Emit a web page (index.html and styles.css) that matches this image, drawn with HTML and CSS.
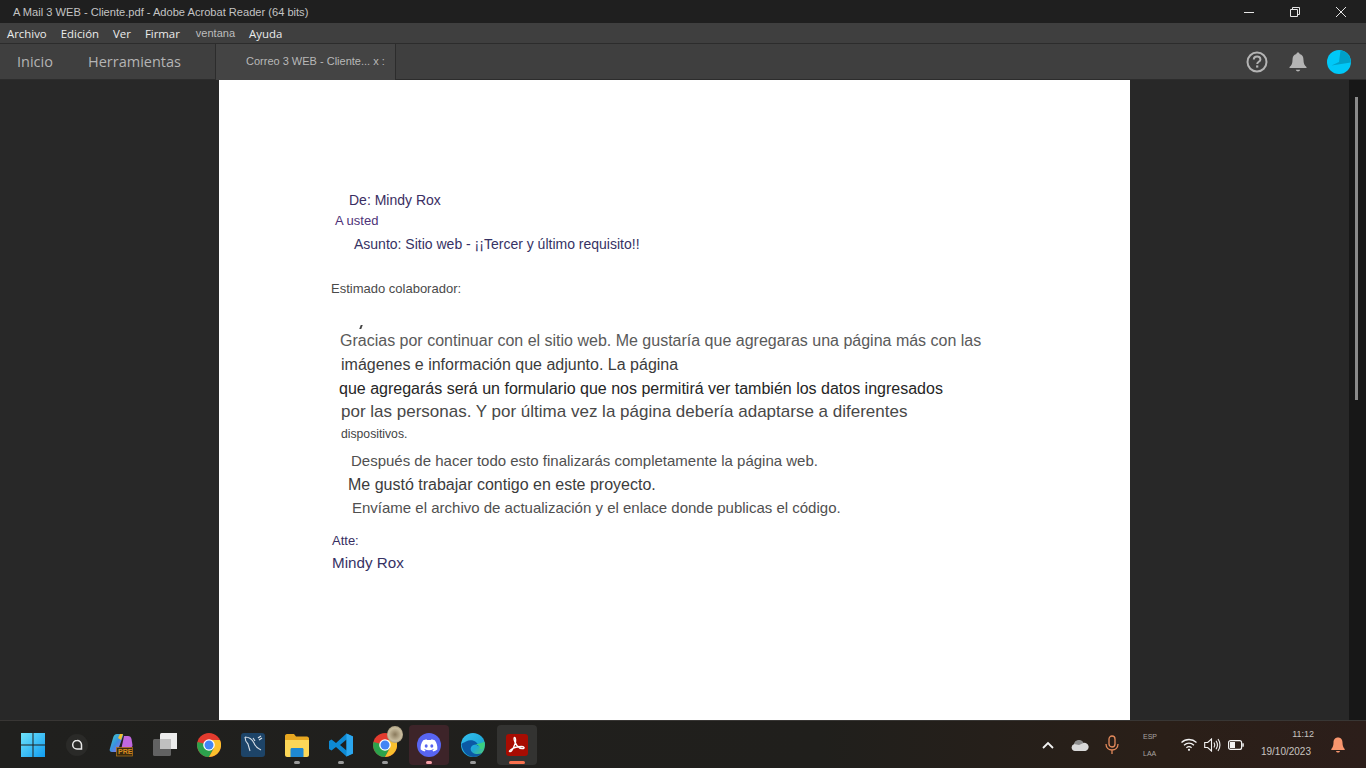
FILE: index.html
```html
<!DOCTYPE html>
<html lang="es">
<head>
    <meta charset="UTF-8">
    <title>A Mail 3 WEB - Cliente.pdf - Adobe Acrobat Reader (64 bits)</title>
    <link rel="stylesheet" href="styles.css">
</head>
<body>
    <header class="title-bar">
        <span class="title-text">A Mail 3 WEB - Cliente.pdf - Adobe Acrobat Reader (64 bits)</span>
        <div class="window-controls">
            <svg width="46" height="20" viewBox="0 0 46 20"><path d="M18 10.500h10" stroke="#e6e6e6" fill="none"/></svg>
            <svg width="46" height="20" viewBox="0 0 46 20"><path d="M18.500 7.500h7v7h-7zM20.500 7.500v-2h7v7h-2" stroke="#e6e6e6" fill="none"/></svg>
            <svg width="46" height="20" viewBox="0 0 46 20"><path d="M18 5l10 10M28 5L18 15" stroke="#e6e6e6" fill="none"/></svg>
        </div>
    </header>

    <nav class="menu-bar">
        <span class="menu-item">Archivo</span>
        <span class="menu-item">Edición</span>
        <span class="menu-item">Ver</span>
        <span class="menu-item">Firmar</span>
        <span class="menu-item menu-thin">ventana</span>
        <span class="menu-item">Ayuda</span>
    </nav>

    <div class="tab-bar">
        <span class="tab-link tab-home">Inicio</span>
        <span class="tab-link tab-tools">Herramientas</span>
        <div class="doc-tab">Correo 3 WEB - Cliente... x :</div>
        <div class="tab-icons">
            <svg class="help-icon" width="22" height="22" viewBox="0 0 22 22"><circle cx="11" cy="11" r="9.500" stroke="#b4b4b4" stroke-width="2" fill="none"/><path d="M7.800 8.600c0-4.200 6.600-4.200 6.600-.2 0 2.400-3.200 2.400-3.200 4.600" stroke="#b4b4b4" stroke-width="2" fill="none"/><rect x="10.100" y="14.400" width="2.200" height="2.200" fill="#b4b4b4"/></svg>
            <svg width="18" height="20" viewBox="0 0 18 20"><path d="M9 .5c1 0 1.600.7 1.600 1.600 2.800.7 3.900 3 3.900 5.800 0 3.400 1 5.400 3 7.100v1H.5v-1c2-1.700 3-3.700 3-7.100 0-2.800 1.100-5.100 3.900-5.800C7.400 1.200 8 .5 9 .5z" fill="#b4b4b4"/><path d="M6.800 17.800h4.400c-.4 1.100-1.200 1.700-2.200 1.700s-1.800-.6-2.200-1.700z" fill="#b4b4b4"/></svg>
            <svg width="24" height="24" viewBox="0 0 24 24"><circle cx="12" cy="12" r="12" fill="#00c8f8"/><path d="M4.500 15.500L12 12 13.500.5C18 1 22 4 23.500 9L23.800 12.500z" fill="#00a0c8"/></svg>
        </div>
    </div>

    <main class="workspace">
        <div class="gutter"></div>
        <article class="pdf-page">
            <p class="line from">De: Mindy Rox</p>
            <p class="line to">A usted</p>
            <p class="line subject">Asunto: Sitio web - ¡¡Tercer y último requisito!!</p>
            <p class="line greeting">Estimado colaborador:</p>
            <div class="speck"></div>
            <p class="line body-1">Gracias por continuar con el sitio web. Me gustaría que agregaras una página más con las</p>
            <p class="line body-2">imágenes e información que adjunto. La página</p>
            <p class="line body-3">que agregarás será un formulario que nos permitirá ver también los datos ingresados</p>
            <p class="line body-4">por las personas. Y por última vez la página debería adaptarse a diferentes</p>
            <p class="line body-5">dispositivos.</p>
            <p class="line body-6">Después de hacer todo esto finalizarás completamente la página web.</p>
            <p class="line body-7">Me gustó trabajar contigo en este proyecto.</p>
            <p class="line body-8">Envíame el archivo de actualización y el enlace donde publicas el código.</p>
            <p class="line atte">Atte:</p>
            <p class="line sign">Mindy Rox</p>
        </article>
        <div class="gutter gutter-right">
            <div class="scroll-strip"><div class="scroll-thumb"></div></div>
        </div>
    </main>

    <footer class="taskbar">
        <div class="task-icons">
            <div class="task-item">
                <svg width="24" height="24" viewBox="0 0 24 24"><defs><linearGradient id="win" x1="0" y1="0" x2="1" y2="1"><stop offset="0" stop-color="#6fe3fb"/><stop offset="1" stop-color="#109cf0"/></linearGradient></defs><path d="M0 0h11.500v11.500H0zM12.500 0H24v11.500H12.500zM0 12.500h11.500V24H0zM12.500 12.500H24V24H12.500z" fill="url(#win)"/></svg>
            </div>
            <div class="task-item">
                <svg width="24" height="24" viewBox="0 0 24 24"><circle cx="12" cy="12" r="11" fill="#2a2a28"/><path d="M12 7.500a4.300 4.300 0 1 0 0 8.600h4.500v-4.300A4.300 4.300 0 0 0 12 7.500z" fill="none" stroke="#e8e8e8" stroke-width="1.500"/></svg>
            </div>
            <div class="task-item">
                <svg width="24" height="24" viewBox="0 0 24 24"><defs><linearGradient id="cop" x1="0" y1="0" x2="1" y2="1"><stop offset="0" stop-color="#3fd4c4"/><stop offset=".5" stop-color="#3a8fe0"/><stop offset="1" stop-color="#d060e0"/></linearGradient></defs><path d="M8 1h5c1 0 1.500 1 1 2L9 17c-.6 1.500-1.500 2-3 2H3c-2 0-2.700-1.500-2.200-3L4 5c.7-2.500 2-4 4-4z" fill="url(#cop)"/><path d="M15 3h4c2 0 3 1 3.500 3l1 6c0 2-1 3-3 3h-8z" fill="#c068e0"/><path d="M9 5l2-4h3l-2 6z" fill="#f0c030"/><rect x="7.500" y="14.500" width="16" height="8.500" fill="#3a2a10" stroke="#b87818" stroke-width=".7"/><text class="pre-text" x="9" y="21">PRE</text></svg>
            </div>
            <div class="task-item">
                <svg width="24" height="24" viewBox="0 0 24 24"><rect x="7" y="0" width="18" height="16" rx="1.500" fill="#ececec"/><rect x="0" y="6" width="18" height="17" rx="1.500" fill="#6e6e6e" fill-opacity=".85"/><rect x="7" y="6" width="11" height="10" fill="#c0c0c0"/></svg>
            </div>
            <div class="task-item">
                <svg width="24" height="24" viewBox="0 0 24 24"><circle cx="12" cy="12" r="12" fill="#e33b2e"/><path d="M.5 9a12 12 0 0 0 1.100 9 12 12 0 0 0 10.400 6l5-9L12 12z" fill="#2ca24c"/><path d="M12 7h11a12 12 0 0 1-11 17l5-9z" fill="#fbc02d"/><circle cx="12" cy="12" r="5.800" fill="#fff"/><circle cx="12" cy="12" r="4.500" fill="#4285f4"/></svg>
            </div>
            <div class="task-item">
                <svg width="24" height="24" viewBox="0 0 24 24"><rect width="24" height="24" rx="3" fill="#1d4468"/><path d="M4 4c4 0 7 2 9 6 1 3 3 5 7 7M4 4c0 3 1 5 3 7l2 7M14 8l-2-3" fill="none" stroke="#d6dee6" stroke-width="1.100"/><path d="M17 5l3-2M18 7l3-2" stroke="#d6dee6" stroke-width="1.300"/></svg>
            </div>
            <div class="task-item">
                <svg width="24" height="24" viewBox="0 0 24 24"><path d="M0 3c0-1 .7-2 2-2h7l2 2.500h11c1 0 2 1 2 2V9H0z" fill="#e8a821"/><path d="M0 7h24v15c0 1-1 2-2 2H2c-1 0-2-1-2-2z" fill="#fcd758"/><path d="M7 15h10c1 0 1.500.6 1.500 1.500V24h-13v-7.500C5.500 15.600 6 15 7 15z" fill="#1e88d2"/></svg>
                <span class="dot"></span>
            </div>
            <div class="task-item">
                <svg width="24" height="24" viewBox="0 0 24 24"><path d="M17.500 .5L24 3.500v17l-6.500 3L7 14l-4.500 3.500L0 16V8l2.500-1.500L7 10zM17.500 6.500L11 12l6.500 5.500z" fill="#0e8ad4"/><path d="M17.500 .5L24 3.500v17l-6.500 3z" fill="#2ba7ef"/></svg>
                <span class="dot"></span>
            </div>
            <div class="task-item">
                <svg width="24" height="24" viewBox="0 0 24 24"><circle cx="12" cy="12" r="12" fill="#e33b2e"/><path d="M.5 9a12 12 0 0 0 1.100 9 12 12 0 0 0 10.400 6l5-9L12 12z" fill="#2ca24c"/><path d="M12 7h11a12 12 0 0 1-11 17l5-9z" fill="#fbc02d"/><circle cx="12" cy="12" r="5.800" fill="#fff"/><circle cx="12" cy="12" r="4.500" fill="#4285f4"/></svg>
                <span class="avatar-badge"></span>
                <span class="dot"></span>
            </div>
            <div class="task-item task-discord">
                <svg width="24" height="24" viewBox="0 0 24 24"><circle cx="12" cy="12" r="12" fill="#5865f2"/><path d="M17.800 7.300a13 13 0 0 0-3.300-1l-.4.800a12 12 0 0 0-4.200 0l-.4-.8a13 13 0 0 0-3.300 1C4 10.400 3.400 13.400 3.700 16.400a13 13 0 0 0 4 2l.9-1.300-1.400-.7.300-.3a9.500 9.500 0 0 0 9 0l.3.300-1.400.7.900 1.300a13 13 0 0 0 4-2c.4-3.500-.6-6.500-2.500-9.100z" fill="#fff"/><ellipse cx="9.200" cy="13" rx="1.500" ry="1.700" fill="#5865f2"/><ellipse cx="14.800" cy="13" rx="1.500" ry="1.700" fill="#5865f2"/></svg>
                <span class="dot dot-pink"></span>
            </div>
            <div class="task-item">
                <svg width="24" height="24" viewBox="0 0 24 24"><defs><linearGradient id="edge" x1="0" y1="0" x2="1" y2="1"><stop offset="0" stop-color="#35c1f1"/><stop offset=".6" stop-color="#1fa8d8"/><stop offset="1" stop-color="#5ad45a"/></linearGradient></defs><circle cx="12" cy="12" r="12" fill="url(#edge)"/><path d="M.5 11C1 16 4 23 12 24c4 0 7-1.500 9-4-3 1.500-7 1.500-9.500-.5-3-2.500-2-6.500 1-7.500 2-.7 4 0 5 1.500-.5-5-7-8-12.500-5C3 9.500 1.500 10 .5 11z" fill="#0c59a4"/><path d="M13 12c3-1 6 .5 6 2.500 0 1-1 1.500-2 1.500h5c1.500-3 2-5 1.500-7z" fill="#3ad080"/></svg>
                <span class="dot"></span>
            </div>
            <div class="task-item task-acrobat">
                <svg width="22" height="22" viewBox="0 0 22 22"><rect width="22" height="22" rx="3" fill="#a80c02"/><path d="M3.500 17.500c1.500 1 3.500-2 5.800-8.500.5-2 .5-5.500-.6-5.500-1.300 0-.7 4 2.200 8 2 2.500 4 3.500 6.500 3 1.500-.4.800-2-2-2-3 0-7.500 1-10 2.800-1.200.8-2.500 2-1.900 2.200z" fill="none" stroke="#fff" stroke-width="1.300"/></svg>
                <span class="dot dot-wide"></span>
            </div>
        </div>

        <div class="tray">
            <svg class="tray-chevron" width="12" height="8" viewBox="0 0 12 8"><path d="M1 7l5-5 5 5" fill="none" stroke="#f2f2f2" stroke-width="1.800"/></svg>
            <svg class="tray-cloud" width="18" height="12" viewBox="0 0 18 12"><path d="M4 12a3.500 3.500 0 0 1-.7-6.900A5 5 0 0 1 12.500 4 4 4 0 0 1 14.500 12z" fill="#d8d8d8"/><path d="M3 5a5 5 0 0 1 9.500-1L8 6z" fill="#8c8c8c"/></svg>
            <svg class="tray-mic" width="14" height="20" viewBox="0 0 14 20"><rect x="4" y="1" width="6" height="11" rx="3" fill="none" stroke="#e48a5c" stroke-width="1.300"/><path d="M1 9c0 8 12 8 12 0M7 15v4" fill="none" stroke="#e48a5c" stroke-width="1.300"/></svg>
            <div class="lang"><span>ESP</span><span>LAA</span></div>
            <svg class="tray-wifi" width="16" height="13" viewBox="0 0 16 13"><path d="M.5 4.500c4.300-4 10.700-4 15 0M3 7.200c3-2.700 7-2.700 10 0M5.400 9.700c1.600-1.300 3.600-1.300 5.200 0" fill="none" stroke="#f2f2f2" stroke-width="1.300"/><circle cx="8" cy="11.800" r="1.100" fill="#f2f2f2"/></svg>
            <svg class="tray-sound" width="17" height="14" viewBox="0 0 17 14"><path d="M.7 4.500h3L7.500 1v12L3.700 9.500h-3z" fill="none" stroke="#f2f2f2" stroke-width="1.100"/><path d="M10 4.500c1 1.500 1 3.500 0 5M12 2.800c1.700 2.500 1.700 6 0 8.400M14 1c2.600 3.500 2.600 8.500 0 12" fill="none" stroke="#f2f2f2" stroke-width="1.100"/></svg>
            <svg class="tray-battery" width="16" height="10" viewBox="0 0 16 10"><rect x=".6" y=".6" width="13" height="8.800" rx="2" fill="none" stroke="#f2f2f2" stroke-width="1.200"/><rect x="2" y="2" width="5" height="6" fill="#f2f2f2"/><rect x="14.300" y="3.300" width="1.500" height="3.400" fill="#f2f2f2"/></svg>
            <div class="clock"><span class="clock-time">11:12</span><span>19/10/2023</span></div>
            <svg class="tray-bell" width="14" height="16" viewBox="0 0 14 16"><path d="M7 .5c3 0 4.500 2.300 4.500 5 0 3 .7 4.800 2.200 6.500v1H.3v-1c1.500-1.700 2.200-3.500 2.200-6.500C2.500 2.800 4 .5 7 .5z" fill="#f9966e"/><path d="M5 14h4c-.3 1-1 1.500-2 1.500S5.300 15 5 14z" fill="#f9966e"/></svg>
        </div>
    </footer>
</body>
</html>
```

FILE: styles.css
```css
* {
    box-sizing: border-box;
}
html, body {
    margin: 0;
    height: 768px;
    overflow: hidden;
}
body {
    font-family: 'Liberation Sans', Arial, sans-serif;
    background-color: #282828;
    display: flex;
    flex-direction: column;
}
p {
    margin: 0;
}

/* title bar */
.title-bar {
    height: 23px;
    flex: none;
    background-color: #1f1f1f;
    display: flex;
    align-items: center;
    justify-content: space-between;
    padding: 0 2px 0 13px;
}
.title-text {
    font-size: 11.1px;
    color: #c4c4c4;
}
.window-controls {
    display: flex;
}

/* menu */
.menu-bar {
    height: 21px;
    flex: none;
    background-color: #3f3f3f;
    border-bottom: 1px solid #2c2c2c;
    display: flex;
    align-items: center;
    gap: 14px;
    padding-left: 7px;
}
.menu-item {
    font-family: 'Open Sans', sans-serif;
    font-size: 11.4px;
    color: #ececec;
}
.menu-thin {
    font-family: 'Liberation Sans', sans-serif;
    font-size: 11px;
    margin-left: 2px;
    color: #bdbdbd;
}

/* tabs */
.tab-bar {
    height: 36px;
    flex: none;
    background-color: #3f3f3f;
    border-bottom: 1px solid #2c2c2c;
    display: flex;
    align-items: center;
}
.tab-link {
    font-family: 'Open Sans', sans-serif;
    font-size: 14.5px;
    color: #b4b4b4;
}
.tab-home {
    margin-left: 17px;
    width: 71px;
}
.tab-tools {
    width: 127px;
}
.doc-tab {
    width: 181px;
    height: 36px;
    background-color: #444;
    border-left: 1px solid #2c2c2c;
    border-right: 1px solid #2c2c2c;
    padding-left: 30px;
    font-size: 11px;
    line-height: 35px;
    color: #b8b8b8;
    white-space: nowrap;
}
.tab-icons {
    margin-left: auto;
    display: flex;
    align-items: center;
    gap: 20px;
    padding-right: 15px;
}
.help-icon {
    margin-right: 1px;
}

/* document area */
.workspace {
    flex: 1;
    min-height: 0;
    display: flex;
}
.gutter {
    width: 219px;
    background-color: #282828;
}
.gutter-right {
    width: 236px;
    display: flex;
    justify-content: flex-end;
}
.scroll-strip {
    width: 17px;
    background-color: #171717;
    padding: 17px 0 0 6px;
}
.scroll-thumb {
    width: 3px;
    height: 303px;
    background-color: #8a8a8a;
}
.pdf-page {
    width: 911px;
    background-color: #fff;
    overflow: hidden;
}
.line {
    white-space: nowrap;
    font-size: 14px;
    line-height: 24px;
    color: #505050;
}
.from {
    margin: 108px 0 0 130px;
    color: #3a2e62;
}
.to {
    margin: -3px 0 0 116px;
    font-size: 13px;
    color: #4e3278;
}
.subject {
    margin: -1px 0 0 135px;
    color: #363264;
}
.greeting {
    margin: 21px 0 0 112px;
    font-size: 13px;
    color: #4a4a4a;
}
.speck {
    margin: 24px 0 0 141px;
    width: 2px;
    height: 4px;
    background-color: #444;
    transform: skewX(-20deg);
}
.body-1 {
    margin-left: 121px;
    font-size: 16px;
    color: #5a5a5a;
}
.body-2 {
    margin-left: 122px;
    font-size: 16px;
    color: #3c3c3c;
}
.body-3 {
    margin-left: 120px;
    font-size: 16px;
    color: #262626;
}
.body-4 {
    margin: -1px 0 0 122px;
    font-size: 17px;
    color: #484848;
}
.body-5 {
    margin: -2px 0 0 122px;
    font-size: 12.2px;
    color: #444;
}
.body-6 {
    margin: 3px 0 0 132px;
    font-size: 15px;
}
.body-7 {
    margin-left: 129px;
    font-size: 16px;
    color: #3c3c3c;
}
.body-8 {
    margin: -1px 0 0 133px;
    font-size: 15px;
}
.atte {
    margin: 9px 0 0 113px;
    font-size: 13px;
    color: #382e62;
}
.sign {
    margin: -2px 0 0 113px;
    font-size: 15.2px;
    color: #363264;
}

/* taskbar */
.taskbar {
    height: 48px;
    flex: none;
    background: linear-gradient(90deg, #20201e 0%, #201f1c 60%, #2a1f18 85%, #2c1e1a 100%);
    border-top: 1px solid #383634;
    display: flex;
    justify-content: space-between;
}
.task-icons {
    display: flex;
    align-items: center;
    padding-left: 11px;
}
.task-item {
    width: 44px;
    height: 40px;
    margin-top: 1px;
    display: flex;
    align-items: center;
    justify-content: center;
    position: relative;
    border-radius: 4px;
}
.task-discord {
    background-color: #3d2429;
    width: 40px;
    margin: 1px 2px 0;
}
.task-acrobat {
    background-color: #333331;
    width: 40px;
    margin: 1px 2px 0;
}
.dot {
    position: absolute;
    left: 50%;
    bottom: 1px;
    width: 6px;
    height: 3px;
    margin-left: -3px;
    border-radius: 2px;
    background-color: #9a9a9a;
}
.dot-pink {
    background-color: #f8a0a8;
}
.dot-wide {
    width: 16px;
    margin-left: -8px;
    background-color: #f9714e;
}
.avatar-badge {
    position: absolute;
    left: 24px;
    top: 1px;
    width: 16px;
    height: 17px;
    border-radius: 50%;
    background: radial-gradient(circle, #8a7a5c, #c8bc9e 55%, #7a6c4e);
}
.pre-text {
    font-family: 'Liberation Sans', sans-serif;
    font-size: 7px;
    font-weight: bold;
    fill: #d88c20;
}

/* system tray */
.tray {
    display: flex;
    align-items: center;
    width: 336px;
}
.tray-chevron {
    margin-left: 12px;
}
.tray-cloud {
    margin-left: 17px;
}
.tray-mic {
    margin-left: 16px;
}
.lang {
    margin-left: 24px;
    width: 27px;
    height: 26px;
    display: flex;
    flex-direction: column;
    justify-content: space-between;
    font-size: 7px;
    line-height: 9px;
    color: #a8a4a0;
    margin-top: 1px;
}
.tray-wifi {
    margin-left: 11px;
}
.tray-sound {
    margin-left: 7px;
}
.tray-battery {
    margin-left: 7px;
}
.clock {
    margin: 0 0 3px 7px;
    width: 60px;
    display: flex;
    flex-direction: column;
    align-items: flex-end;
    gap: 7px;
    font-size: 10px;
    color: #c8c4c0;
}
.clock-time {
    font-size: 9px;
    margin-right: -3px;
}
.tray-bell {
    margin-left: 20px;
}
```
